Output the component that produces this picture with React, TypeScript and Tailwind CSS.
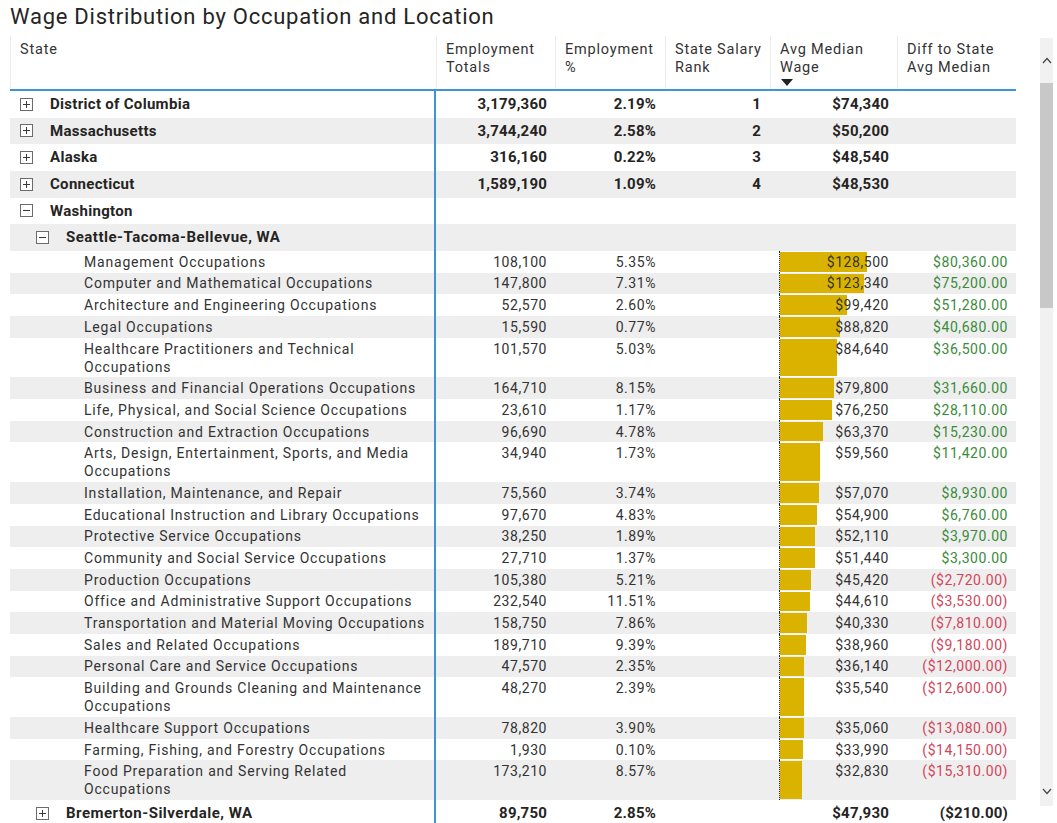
import React from 'react';

type Occ = {
    name: string;
    wrap?: string;
    total: string;
    pct: string;
    wage: number;
    diff: number;
};

const occupations: Occ[] = [
    { name: 'Management Occupations', total: '108,100', pct: '5.35%', wage: 128500, diff: 80360 },
    { name: 'Computer and Mathematical Occupations', total: '147,800', pct: '7.31%', wage: 123340, diff: 75200 },
    { name: 'Architecture and Engineering Occupations', total: '52,570', pct: '2.60%', wage: 99420, diff: 51280 },
    { name: 'Legal Occupations', total: '15,590', pct: '0.77%', wage: 88820, diff: 40680 },
    { name: 'Healthcare Practitioners and Technical', wrap: 'Occupations', total: '101,570', pct: '5.03%', wage: 84640, diff: 36500 },
    { name: 'Business and Financial Operations Occupations', total: '164,710', pct: '8.15%', wage: 79800, diff: 31660 },
    { name: 'Life, Physical, and Social Science Occupations', total: '23,610', pct: '1.17%', wage: 76250, diff: 28110 },
    { name: 'Construction and Extraction Occupations', total: '96,690', pct: '4.78%', wage: 63370, diff: 15230 },
    { name: 'Arts, Design, Entertainment, Sports, and Media', wrap: 'Occupations', total: '34,940', pct: '1.73%', wage: 59560, diff: 11420 },
    { name: 'Installation, Maintenance, and Repair', total: '75,560', pct: '3.74%', wage: 57070, diff: 8930 },
    { name: 'Educational Instruction and Library Occupations', total: '97,670', pct: '4.83%', wage: 54900, diff: 6760 },
    { name: 'Protective Service Occupations', total: '38,250', pct: '1.89%', wage: 52110, diff: 3970 },
    { name: 'Community and Social Service Occupations', total: '27,710', pct: '1.37%', wage: 51440, diff: 3300 },
    { name: 'Production Occupations', total: '105,380', pct: '5.21%', wage: 45420, diff: -2720 },
    { name: 'Office and Administrative Support Occupations', total: '232,540', pct: '11.51%', wage: 44610, diff: -3530 },
    { name: 'Transportation and Material Moving Occupations', total: '158,750', pct: '7.86%', wage: 40330, diff: -7810 },
    { name: 'Sales and Related Occupations', total: '189,710', pct: '9.39%', wage: 38960, diff: -9180 },
    { name: 'Personal Care and Service Occupations', total: '47,570', pct: '2.35%', wage: 36140, diff: -12000 },
    { name: 'Building and Grounds Cleaning and Maintenance', wrap: 'Occupations', total: '48,270', pct: '2.39%', wage: 35540, diff: -12600 },
    { name: 'Healthcare Support Occupations', total: '78,820', pct: '3.90%', wage: 35060, diff: -13080 },
    { name: 'Farming, Fishing, and Forestry Occupations', total: '1,930', pct: '0.10%', wage: 33990, diff: -14150 },
    { name: 'Food Preparation and Serving Related', wrap: 'Occupations', total: '173,210', pct: '8.57%', wage: 32830, diff: -15310 },
];

const states = [
    { name: 'District of Columbia', total: '3,179,360', pct: '2.19%', rank: '1', wage: '$74,340' },
    { name: 'Massachusetts', total: '3,744,240', pct: '2.58%', rank: '2', wage: '$50,200' },
    { name: 'Alaska', total: '316,160', pct: '0.22%', rank: '3', wage: '$48,540' },
    { name: 'Connecticut', total: '1,589,190', pct: '1.09%', rank: '4', wage: '$48,530' },
];

const cols = 'grid grid-cols-[426px_119px_110px_105px_127px_119px]';

const money = (n: number) => '$' + n.toLocaleString('en-US');
const diffText = (n: number) => {
    const s = '$' + Math.abs(n).toLocaleString('en-US', { minimumFractionDigits: 2 });
    return n < 0 ? `(${s})` : s;
};

function ToggleBox({ open }: { open: boolean }) {
    return (
        <svg width="13" height="13" viewBox="0 0 13 13" className="shrink-0">
            <rect x="0.5" y="0.5" width="12" height="12" fill="white" stroke="#6b6b6b" />
            <line x1="3" y1="6.5" x2="10" y2="6.5" stroke="#3a3a3a" />
            {!open ? <line x1="6.5" y1="3" x2="6.5" y2="10" stroke="#3a3a3a" /> : null}
        </svg>
    );
}

function Chevron({ up }: { up: boolean }) {
    return (
        <svg width="10" height="7" viewBox="0 0 10 7">
            <path d={up ? 'M1 6 L5 1.5 L9 6' : 'M1 1 L5 5.5 L9 1'} fill="none" stroke="#444" strokeWidth="1.2" />
        </svg>
    );
}

export default function App() {
    return (
        <div className="h-[823px] w-[1057px] overflow-hidden bg-white font-['Roboto',sans-serif] text-[#252423]">
            <h1 className="pl-[10px] pt-[3px] text-[22px] leading-[28px] tracking-[0.75px] text-[#252423]">
                Wage Distribution by Occupation and Location
            </h1>

            <div className="mt-[5px] flex">
                <div className="ml-[10px] w-[1006px] shrink-0">
                    {/* header */}
                    <div className={`${cols} h-[55px] border-b-2 border-[#3f94d8] text-[14.5px] leading-[18px] tracking-[0.8px] text-[#333]`}>
                        <div className="border-l border-[#ececec] pl-[9px] pt-[5px]">State</div>
                        <div className="border-l border-[#ececec] pl-[9px] pt-[5px]">Employment<br />Totals</div>
                        <div className="border-l border-[#ececec] pl-[9px] pt-[5px]">Employment<br />%</div>
                        <div className="border-l border-[#ececec] pl-[9px] pt-[5px]">State Salary<br />Rank</div>
                        <div className="border-l border-[#ececec] pl-[9px] pt-[5px]">
                            Avg Median<br />Wage
                            <svg width="12" height="7" viewBox="0 0 12 7" className="mt-[2px] ml-[1px]">
                                <path d="M0 0 L12 0 L6 7 Z" fill="#222" />
                            </svg>
                        </div>
                        <div className="border-l border-[#ececec] pl-[9px] pt-[5px]">Diff to State<br />Avg Median</div>
                    </div>

                    {/* state rows */}
                    {states.map((s, i) => (
                        <div
                            key={s.name}
                            className={`${cols} h-[26.67px] items-center text-[15px] font-bold tracking-[0.2px] ${i % 2 === 1 ? 'bg-[#eeeeee]' : ''}`}
                        >
                            <div className="flex h-full items-center gap-[17px] border-r-2 border-[#3f94d8] pl-[10px] tracking-[0.3px]">
                                <ToggleBox open={false} />
                                {s.name}
                            </div>
                            <div className="pr-[8px] text-right">{s.total}</div>
                            <div className="pr-[9px] text-right">{s.pct}</div>
                            <div className="pr-[9px] text-right">{s.rank}</div>
                            <div className="pr-[8px] text-right">{s.wage}</div>
                            <div />
                        </div>
                    ))}

                    <div className={`${cols} h-[26.67px] items-center text-[15px] font-bold tracking-[0.3px]`}>
                        <div className="flex h-full items-center gap-[17px] border-r-2 border-[#3f94d8] pl-[10px]">
                            <ToggleBox open />
                            Washington
                        </div>
                    </div>

                    <div className={`${cols} h-[26.67px] items-center bg-[#eeeeee] text-[15px] font-bold tracking-[0.5px]`}>
                        <div className="flex h-full items-center gap-[17px] border-r-2 border-[#3f94d8] pl-[26px]">
                            <ToggleBox open />
                            Seattle-Tacoma-Bellevue, WA
                        </div>
                    </div>

                    {/* occupation rows */}
                    {occupations.map((o, i) => (
                        <div
                            key={o.name}
                            className={`${cols} text-[14px] leading-[18px] tracking-[0.55px] text-[#333] ${i % 2 === 1 ? 'bg-[#eeeeee]' : ''}`}
                        >
                            <div className="whitespace-nowrap border-r-2 border-[#3f94d8] py-[1.85px] pl-[74px] tracking-[0.8px]">
                                {o.name}
                                {o.wrap ? (
                                    <>
                                        <br />
                                        {o.wrap}
                                    </>
                                ) : null}
                            </div>
                            <div className="py-[1.85px] pr-[8px] text-right">{o.total}</div>
                            <div className="py-[1.85px] pr-[9px] text-right">{o.pct}</div>
                            <div />
                            <div className="relative py-[1.85px] pr-[8px] text-right">
                                <div
                                    className="absolute top-[1px] bottom-[1px] left-[10px] bg-[#d9b300]"
                                    style={{ width: `${(o.wage / 128500) * 87}px` }}
                                />
                                <div className="absolute top-0 bottom-0 left-[9px] border-l border-dotted border-[#222]" />
                                <span className="relative">{money(o.wage)}</span>
                            </div>
                            <div
                                className={`py-[1.85px] pr-[8px] text-right ${o.diff < 0 ? 'text-[#d2455a]' : 'text-[#3a8b3a]'}`}
                            >
                                {diffText(o.diff)}
                            </div>
                        </div>
                    ))}

                    <div className={`${cols} h-[26.67px] items-center text-[15px] font-bold tracking-[0.2px]`}>
                        <div className="flex h-full items-center gap-[17px] border-r-2 border-[#3f94d8] pl-[26px] tracking-[0.5px]">
                            <ToggleBox open={false} />
                            Bremerton-Silverdale, WA
                        </div>
                        <div className="pr-[8px] text-right">89,750</div>
                        <div className="pr-[9px] text-right">2.85%</div>
                        <div />
                        <div className="pr-[8px] text-right">$47,930</div>
                        <div className="pr-[8px] text-right">($210.00)</div>
                    </div>
                </div>

                {/* scrollbar */}
                <div className="ml-[24px] mt-[2px] flex h-[768px] w-[13px] flex-col items-center bg-[#f1f1f1]">
                    <div className="flex h-[45px] items-center justify-center">
                        <Chevron up />
                    </div>
                    <div className="h-[225px] w-full bg-[#c8c8c8]" />
                    <div className="flex-1" />
                    <div className="flex h-[30px] items-center justify-center">
                        <Chevron up={false} />
                    </div>
                </div>
            </div>
        </div>
    );
}
